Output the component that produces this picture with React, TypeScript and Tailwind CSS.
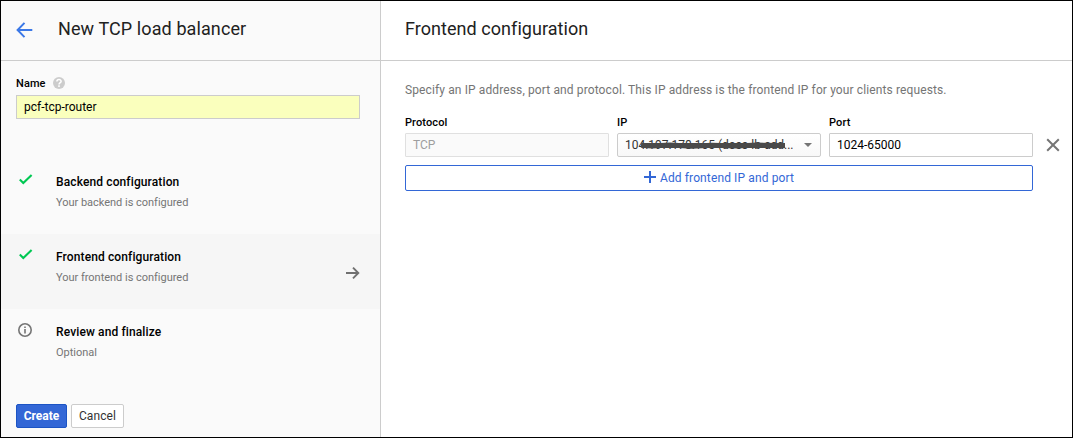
import React from 'react';

function Check() {
  return (
    <svg className="block h-4 w-4" viewBox="0 0 16 16" fill="none" stroke="#00c853" strokeWidth="2.1">
      <path d="M2.8 8.5 6.3 12 14.6 4" />
    </svg>
  );
}

function Info() {
  return (
    <svg className="mt-px block h-4 w-4" viewBox="0 0 16 16" fill="none" stroke="#757575" strokeWidth="1.6">
      <circle cx="8" cy="8" r="6.2" />
      <path d="M8 7v4.5M8 4.4V6" />
    </svg>
  );
}

type StepProps = { icon: React.ReactNode; title: string; note: string; active?: boolean };

function Step({ icon, title, note, active }: StepProps) {
  return (
    <div className={active ? 'flex h-[75px] bg-[#f6f6f6]' : 'flex h-[75px]'}>
      <div className="ml-4 w-[39px] shrink-0 pt-3">{icon}</div>
      <div className="flex-1 pt-[14px]">
        <div className="text-[12px] leading-[18px] font-medium tracking-[0.12px] text-black">{title}</div>
        <div className="mt-1 text-[11px] leading-4 tracking-[-0.02px] text-[#757575]">{note}</div>
      </div>
      {active && (
        <svg className="mt-[31px] mr-5 h-4 w-4" viewBox="0 0 16 16" fill="none" stroke="#707070" strokeWidth="1.9">
          <path d="M2 8H14.2M9 2.7 14.3 8 9 13.3" />
        </svg>
      )}
    </div>
  );
}

function Label({ children }: { children: React.ReactNode }) {
  return <div className="h-4 text-[11px] leading-4 font-medium tracking-[0.1px] text-black">{children}</div>;
}

export default function App() {
  return (
    <div className="flex h-[438px] w-[1073px] overflow-hidden border border-black bg-white font-['Roboto',sans-serif]">
      <aside className="flex w-[380px] shrink-0 flex-col border-r border-[#cccccc] bg-[#fafafa]">
        <header className="flex h-[60px] shrink-0 items-center border-b border-[#cccccc] pl-[15px]">
          <svg className="-mt-px h-4 w-[17px]" viewBox="0 0 17 16" fill="none" stroke="#3b78e7" strokeWidth="2">
            <path d="M16.3 8H2M8.5.9 1.6 8l6.9 7.1" />
          </svg>
          <h1 className="-mt-[3px] ml-[25px] text-[18px] leading-6 tracking-[0.1px] text-[#212121]">New TCP load balancer</h1>
        </header>
        <div className="h-[98px] shrink-0 pt-[15px] pr-5 pl-[15px]">
          <div className="flex items-center">
            <Label>Name</Label>
            <svg className="-mt-[2px] ml-[7px] h-3 w-3" viewBox="0 0 12 12" fill="none">
              <circle cx="6" cy="6" r="6" fill="#cccccc" />
              <path d="M3.9 4.6C3.9 1.9 8.1 1.9 8.1 4.4 8.1 5.6 6 5.8 6 7.5M6 8.3v1.6" stroke="white" strokeWidth="1.5" />
            </svg>
          </div>
          <div className="mt-[3px] h-6 w-[344px] border border-[#cccccc] bg-[#faffbd] pl-[7px] text-[12px] leading-[22px] text-black">
            pcf-tcp-router
          </div>
        </div>
        <Step icon={<Check />} title="Backend configuration" note="Your backend is configured" />
        <Step icon={<Check />} title="Frontend configuration" note="Your frontend is configured" active />
        <Step icon={<Info />} title="Review and finalize" note="Optional" />
        <div className="mt-5 flex gap-1 pl-[15px]">
          <button className="h-6 w-[51px] rounded-[2px] border border-[#1c54c4] bg-[#3367d6] text-[12px] leading-[22px] font-bold text-white">Create</button>
          <button className="h-6 w-[53px] rounded-[2px] border border-[#cccccc] bg-white text-[12px] leading-[22px] tracking-[0.1px] text-[#333333]">Cancel</button>
        </div>
      </aside>
      <main className="flex-1">
        <header className="flex h-[60px] items-center border-b border-[#cccccc] pl-6">
          <h2 className="-mt-[3px] text-[18px] leading-6 tracking-[0.05px] text-[#212121]">Frontend configuration</h2>
        </header>
        <div className="pt-5 pl-6">
          <p className="text-[12px] leading-[18px] tracking-[0.117px] whitespace-nowrap text-[#757575]">
            Specify an IP address, port and protocol. This IP address is the frontend IP for your clients requests.
          </p>
          <div className="mt-4 flex gap-2">
            <div className="w-[204px]">
              <Label>Protocol</Label>
              <div className="mt-[2px] h-6 rounded-[1px] border border-[#e0e0e0] bg-[#fafafa] pl-[7px] text-[12px] leading-[22px] text-[#9e9e9e]">TCP</div>
            </div>
            <div className="w-[204px]">
              <Label>IP</Label>
              <div className="relative mt-[2px] flex h-6 items-center justify-between rounded-[2px] border border-[#cccccc] bg-linear-to-b from-white to-[#f8f8f8] pr-2 pl-[7px] text-[12px] leading-[22px] whitespace-nowrap text-[#333333]">
                <span className="tracking-[-0.03px]">104.197.178.165 (docs-lb-add...</span>
                <svg className="h-1 w-2" viewBox="0 0 8 4" fill="#757575"><path d="M0 0h8L4 4z" /></svg>
                <svg className="absolute top-2 left-[22px] h-[7px] w-[148px]" viewBox="0 0 148 7" fill="none" stroke="#4a4a4a">
                  <path d="M2 3.5H145" strokeWidth="5" />
                  <path d="M1 3.2 12 4l18-1 22 1.3 20-1 25 .8 20-1 27 .5" strokeWidth="5" strokeLinejoin="round" />
                </svg>
              </div>
            </div>
            <div className="w-[204px]">
              <Label>Port</Label>
              <div className="mt-[2px] h-6 rounded-[1px] border border-[#cccccc] bg-white pl-[7px] text-[12px] leading-[22px] text-black">1024-65000</div>
            </div>
            <svg className="mt-[23px] ml-[5px] h-[14px] w-[14px]" viewBox="0 0 14 14" fill="none" stroke="#757575" strokeWidth="2">
              <path d="m1.2 1.2 11.6 11.6m0-11.6L1.2 12.8" />
            </svg>
          </div>
          <button className="mt-2 flex h-[26px] w-[628px] items-center justify-center rounded-[2px] border border-[#3367d6] bg-white text-[12px] leading-6 tracking-[0.12px] text-[#3367d6]">
            <svg className="-mt-[2px] mr-1 h-3 w-3" viewBox="0 0 12 12" fill="none" stroke="#3367d6" strokeWidth="2"><path d="M6 0v12M0 6h12" /></svg>
            Add frontend IP and port
          </button>
        </div>
      </main>
    </div>
  );
}
